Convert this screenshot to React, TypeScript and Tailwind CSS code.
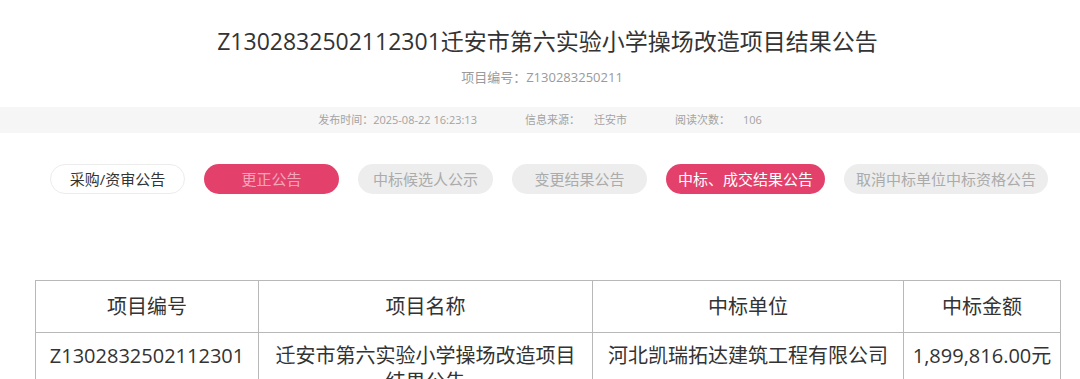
const FONT = '"Open Sans", "Noto Sans CJK SC", sans-serif';

const TABS: { label: string; kind: "outline" | "pink" | "pinkFaded" | "gray" }[] = [
  { label: "采购/资审公告", kind: "outline" },
  { label: "更正公告", kind: "pinkFaded" },
  { label: "中标候选人公示", kind: "gray" },
  { label: "变更结果公告", kind: "gray" },
  { label: "中标、成交结果公告", kind: "pink" },
  { label: "取消中标单位中标资格公告", kind: "gray" },
];

const TAB_STYLES = {
  outline: "border border-[#ececec] bg-white text-[#333]",
  pink: "bg-[#e3416b] text-white",
  pinkFaded: "bg-[#e3416b] text-[#f3a6ba]",
  gray: "bg-[#ededed] text-[#ababab]",
};

export default function App() {
  return (
    <div className="h-[379px] w-[1080px] overflow-hidden bg-white" style={{ fontFamily: FONT }}>
      <h1 className="pt-[25px] pl-[15px] text-center text-[23px] leading-[32px] font-normal text-[#333]">
        Z1302832502112301迁安市第六实验小学操场改造项目结果公告
      </h1>
      <p className="mt-[10px] pl-[4px] text-center text-[13px] leading-[20px] text-[#9a9a9a]">项目编号：Z130283250211</p>

      <div className="mt-[20px] flex h-[26px] items-center justify-center gap-[48px] bg-[#f6f6f6] text-[11px] text-[#a3a3a3]">
        <span>
          发布时间：<span>2025-08-22 16:23:13</span>
        </span>
        <span>
          信息来源：<span className="ml-[14px]">迁安市</span>
        </span>
        <span>
          阅读次数：<span className="ml-[13px]">106</span>
        </span>
      </div>

      <div className="mt-[31px] flex gap-[19px] pl-[50px]">
        {TABS.map((t) => (
          <div
            key={t.label}
            className={`flex h-[30px] min-w-[135px] items-center justify-center rounded-full px-[12px] text-[15px] ${TAB_STYLES[t.kind]}`}
          >
            {t.label}
          </div>
        ))}
      </div>

      <table className="mt-[86px] ml-[35px] w-[1025px] table-fixed border-collapse text-[20px] text-[#333]">
        <colgroup>
          <col className="w-[223px]" />
          <col className="w-[334px]" />
          <col className="w-[311px]" />
          <col className="w-[157px]" />
        </colgroup>
        <thead>
          <tr className="h-[52px]">
            {["项目编号", "项目名称", "中标单位", "中标金额"].map((h) => (
              <th key={h} className="border border-[#b8b8b8] text-center font-normal">
                {h}
              </th>
            ))}
          </tr>
        </thead>
        <tbody>
          <tr>
            <td className="border border-[#b8b8b8] px-[8px] py-[10px] text-center align-top leading-[26px]">Z1302832502112301</td>
            <td className="border border-[#b8b8b8] px-[12px] py-[10px] text-center align-top leading-[26px]">
              迁安市第六实验小学操场改造项目结果公告
            </td>
            <td className="border border-[#b8b8b8] px-[8px] py-[10px] text-center align-top leading-[26px]">河北凯瑞拓达建筑工程有限公司</td>
            <td className="border border-[#b8b8b8] px-[4px] py-[10px] text-center align-top leading-[26px]">1,899,816.00元</td>
          </tr>
        </tbody>
      </table>
    </div>
  );
}
